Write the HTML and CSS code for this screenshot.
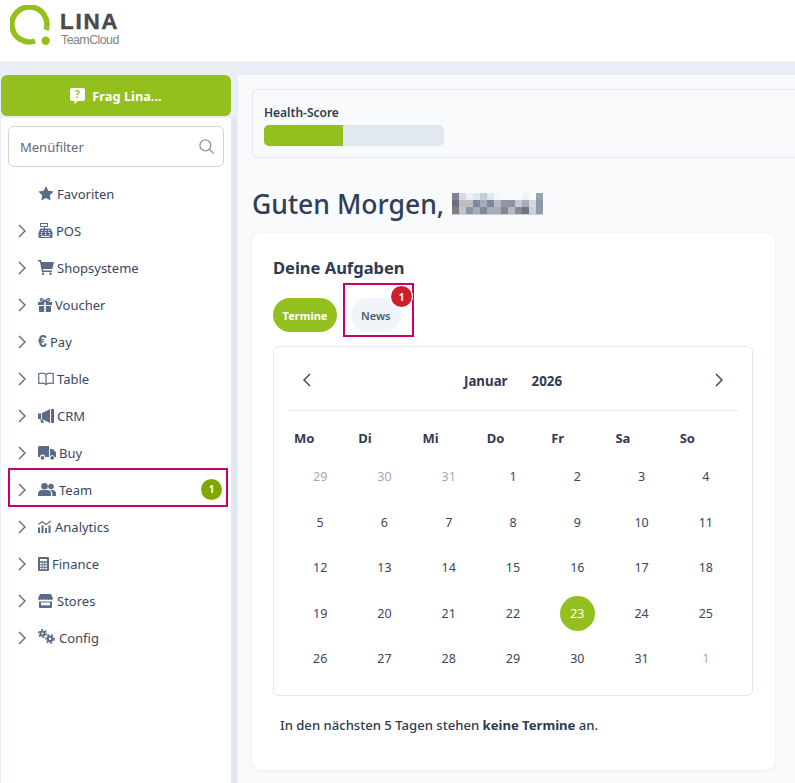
FILE: index.html
```html
<!DOCTYPE html>
<html lang="de">
<head>
    <meta charset="UTF-8">
    <meta name="viewport" content="width=device-width, initial-scale=1.0">
    <title>LINA TeamCloud</title>
    <link rel="stylesheet" href="styles.css">
</head>
<body>
    <header class="topbar">
        <div class="logo">
            <svg class="logo-mark" width="42" height="46" viewBox="0 0 42 46">
                <path d="M25 36 A17.500 17.500 0 1 1 36 25" fill="none" stroke="#93c01f" stroke-width="5.500"/>
                <circle cx="35.700" cy="35.700" r="4.200" fill="#93c01f"/>
            </svg>
            <div class="logo-text">
                <div class="logo-name">LINA</div>
                <div class="logo-sub">TeamCloud</div>
            </div>
        </div>
    </header>

    <div class="layout">
        <aside class="sidebar">
            <button class="ask-btn">
                <svg width="15" height="16" viewBox="0 0 15 16"><path d="M2 0h11a2 2 0 0 1 2 2v9a2 2 0 0 1-2 2H8l-3.500 3v-3H2a2 2 0 0 1-2-2V2a2 2 0 0 1 2-2z" fill="#fff"/><text x="7.500" y="10" class="ask-mark">?</text></svg>
                Frag Lina...
            </button>
            <div class="side-panel">
                <div class="filter">
                    <span>Menüfilter</span>
                    <svg width="15" height="15" viewBox="0 0 16 16" fill="none" stroke="#8b97a8" stroke-width="1.400"><circle cx="6.800" cy="6.800" r="5.800"/><path d="M11 11l4.500 4.500"/></svg>
                </div>
                <nav class="menu">
                    <a class="menu-item"><span class="chev"></span><svg class="ico" width="16" height="15" viewBox="0 0 16 15"><path d="M8 0l2.300 4.800 5.300.8-3.800 3.700.9 5.300L8 12.100l-4.700 2.500.9-5.300L.4 5.600l5.300-.8z"/></svg><span class="lbl">Favoriten</span></a>
                    <a class="menu-item"><svg class="chev" viewBox="0 0 8 14"><path d="M1 1l6 6-6 6"/></svg><svg class="ico" width="15" height="15" viewBox="0 0 15 15"><path d="M2 0h8v4H7v1.500h5a1 1 0 0 1 1 .7L14.500 10v4a1 1 0 0 1-1 1h-12a1 1 0 0 1-1-1v-4L2 6.200a1 1 0 0 1 1-.7h3V4H2zM3 1v2h6V1z"/><path d="M3.500 7.500h1.500M6.800 7.500h1.500M10 7.500h1.500M3 9.500h1.500M6.800 9.500h1.500M10.500 9.500H12M2.500 11.500H4M6.800 11.500h1.500M11 11.500h1.500M3 13.400h9" stroke="#fff" stroke-width="1"/></svg><span class="lbl">POS</span></a>
                    <a class="menu-item"><svg class="chev" viewBox="0 0 8 14"><path d="M1 1l6 6-6 6"/></svg><svg class="ico" width="16" height="15" viewBox="0 0 16 15"><path d="M0 0h3l.6 2H16l-1.700 7H5l.4 1.500H14V12H4L1.900 1.500H0z"/><circle cx="5" cy="13.800" r="1.200"/><circle cx="12.500" cy="13.800" r="1.200"/></svg><span class="lbl">Shopsysteme</span></a>
                    <a class="menu-item"><svg class="chev" viewBox="0 0 8 14"><path d="M1 1l6 6-6 6"/></svg><svg class="ico" width="14" height="14" viewBox="0 0 14 14"><path d="M0 4h6.200v3H0zM7.800 4H14v3H7.800zM1 8h5.200v6H2a1 1 0 0 1-1-1zM7.800 8H13v5a1 1 0 0 1-1 1H7.800z"/><path d="M7 3.500C5 .5 3 0 2.500 1.200S4 3.500 7 3.500zM7 3.500C9 .5 11 0 11.500 1.200S10 3.500 7 3.500z" fill="none" stroke="#5a6b85" stroke-width="1.300"/></svg><span class="lbl">Voucher</span></a>
                    <a class="menu-item"><svg class="chev" viewBox="0 0 8 14"><path d="M1 1l6 6-6 6"/></svg><span class="euro">€</span><span class="lbl">Pay</span></a>
                    <a class="menu-item"><svg class="chev" viewBox="0 0 8 14"><path d="M1 1l6 6-6 6"/></svg><svg class="ico ico-line" width="16" height="14" viewBox="0 0 16 14"><path d="M8 2.500C6.500 1 3 1 .8 1.500v10c2.200-.5 5.700-.5 7.200 1 1.500-1.500 5-1.500 7.200-1v-10C13 1 9.500 1 8 2.500zM8 2.500v10"/></svg><span class="lbl">Table</span></a>
                    <a class="menu-item"><svg class="chev" viewBox="0 0 8 14"><path d="M1 1l6 6-6 6"/></svg><svg class="ico" width="16" height="14" viewBox="0 0 16 14"><path d="M0 4.500h3V10H0zM3.800 4.300L12 0v14L3.800 10zM13 0h3v14h-3zM2 10.500h2.500L6 14H3.500z"/></svg><span class="lbl">CRM</span></a>
                    <a class="menu-item"><svg class="chev" viewBox="0 0 8 14"><path d="M1 1l6 6-6 6"/></svg><svg class="ico" width="18" height="14" viewBox="0 0 18 14"><path d="M1.500 0H11v11H7a2.500 2.500 0 0 0-5 0A1.500 1.500 0 0 1 0 10V1.500A1.500 1.500 0 0 1 1.500 0zM12 3h3l3 3.500V11h-1.500a2.500 2.500 0 0 0-4.500-.500z"/><circle cx="4.500" cy="11.800" r="1.900"/><circle cx="14.200" cy="11.800" r="1.900"/></svg><span class="lbl">Buy</span></a>
                    <a class="menu-item menu-item-marked"><svg class="chev" viewBox="0 0 8 14"><path d="M1 1l6 6-6 6"/></svg><svg class="ico" width="18" height="13" viewBox="0 0 18 13"><circle cx="6.500" cy="3.300" r="3.300"/><path d="M0 13v-2.500A4 4 0 0 1 4 7h5a4 4 0 0 1 4 4v2z"/><circle cx="13" cy="3.500" r="2.800"/><path d="M11.500 7H14a4 4 0 0 1 4 4v2h-3.800v-2.500a4 4 0 0 0-2.700-3.500z"/></svg><span class="lbl">Team</span><span class="menu-badge">1</span></a>
                    <a class="menu-item"><svg class="chev" viewBox="0 0 8 14"><path d="M1 1l6 6-6 6"/></svg><svg class="ico" width="14" height="13" viewBox="0 0 14 13"><path d="M0 7.500h2V13H0zM3.500 5.500h2V13h-2zM7 8h2v5H7zM10.500 5.500h2V13h-2z"/><path d="M.5 4.500L4.200 1.500 8 4.500l5-3.500" fill="none" stroke="#5a6b85" stroke-width="1.100"/></svg><span class="lbl">Analytics</span></a>
                    <a class="menu-item"><svg class="chev" viewBox="0 0 8 14"><path d="M1 1l6 6-6 6"/></svg><svg class="ico" width="11" height="14" viewBox="0 0 11 14"><path d="M1 0h9a1 1 0 0 1 1 1v12a1 1 0 0 1-1 1H1a1 1 0 0 1-1-1V1a1 1 0 0 1 1-1z"/><path d="M2 2h7v2.200H2zM2 5.800h1.800v1.500H2zM4.600 5.800h1.800v1.500H4.600zM7.200 5.800H9v1.500H7.200zM2 8.300h1.800v1.500H2zM4.600 8.300h1.800v1.500H4.600zM7.200 8.300H9v1.500H7.200zM2 10.800h1.800v1.500H2zM4.600 10.800h1.800v1.500H4.600zM7.200 10.800H9v1.500H7.200z" fill="#fff"/></svg><span class="lbl">Finance</span></a>
                    <a class="menu-item"><svg class="chev" viewBox="0 0 8 14"><path d="M1 1l6 6-6 6"/></svg><svg class="ico" width="15" height="14" viewBox="0 0 15 14"><path d="M2 0h11l2 4.500a1.700 1.700 0 0 1-3 .8 2.100 2.100 0 0 1-3 0 2.100 2.100 0 0 1-3 0 2.100 2.100 0 0 1-3 0 1.700 1.700 0 0 1-3-.8z"/><path d="M1 7.500h13V13a1 1 0 0 1-1 1H2a1 1 0 0 1-1-1z"/><path d="M3 8.500h9v2.800H3z" fill="#fff"/></svg><span class="lbl lbl-stores">Stores</span></a>
                    <a class="menu-item"><svg class="chev" viewBox="0 0 8 14"><path d="M1 1l6 6-6 6"/></svg><svg class="ico ico-gears" width="17" height="15" viewBox="0 0 17 15"><circle cx="4.500" cy="4.500" r="3.100"/><circle cx="4.500" cy="4.500" r="3.800" class="gear-teeth"/><circle cx="4.500" cy="4.500" r="1.100" fill="#fff"/><circle cx="12" cy="9.800" r="3.400"/><circle cx="12" cy="9.800" r="4.100" class="gear-teeth"/><circle cx="12" cy="9.800" r="1.200" fill="#fff"/></svg><span class="lbl">Config</span></a>
                </nav>
            </div>
        </aside>

        <main class="content">
            <section class="health">
                <div class="health-title">Health-Score</div>
                <div class="health-track"><div class="health-fill"></div></div>
            </section>

            <h1 class="greeting">Guten Morgen,
                <svg class="blurred-name" width="91" height="22" viewBox="0 0 13 3.150" preserveAspectRatio="none" shape-rendering="crispEdges">
                    <rect x="0" y="0" width="1" height="1" fill="#7f8792"/><rect x="1" y="0" width="1" height="1" fill="#d3dbe6"/><rect x="2" y="0" width="1" height="1" fill="#eceff3"/><rect x="3" y="0" width="1" height="1" fill="#e4e7ec"/><rect x="4" y="0" width="1" height="1" fill="#c0cddd"/><rect x="5" y="0" width="1" height="1" fill="#dfe5ec"/><rect x="6" y="0" width="1" height="1" fill="#f3f5f8"/><rect x="10" y="0" width="1" height="1" fill="#eef1f5"/><rect x="12" y="0" width="1" height="1" fill="#98a2b0"/>
                    <rect x="0" y="1" width="1" height="1" fill="#6b717c"/><rect x="1" y="1" width="1" height="1" fill="#b8bec6"/><rect x="2" y="1" width="1" height="1" fill="#c2bdbd"/><rect x="3" y="1" width="1" height="1" fill="#7d8a9b"/><rect x="4" y="1" width="1" height="1" fill="#a3acb8"/><rect x="5" y="1" width="1" height="1" fill="#7f8894"/><rect x="6" y="1" width="1" height="1" fill="#b4bbc5"/><rect x="7" y="1" width="1" height="1" fill="#9298a2"/><rect x="8" y="1" width="1" height="1" fill="#8e939d"/><rect x="9" y="1" width="1" height="1" fill="#c5cbd4"/><rect x="10" y="1" width="1" height="1" fill="#a7adb6"/><rect x="11" y="1" width="1" height="1" fill="#d5dae1"/><rect x="12" y="1" width="1" height="1" fill="#8f99a6"/>
                    <rect x="0" y="2" width="1" height="1" fill="#7c7f87"/><rect x="1" y="2" width="1" height="1" fill="#c9c4c4"/><rect x="2" y="2" width="1" height="1" fill="#8b97a6"/><rect x="3" y="2" width="1" height="1" fill="#a4adba"/><rect x="4" y="2" width="1" height="1" fill="#7f8894"/><rect x="5" y="2" width="1" height="1" fill="#a6aeb9"/><rect x="6" y="2" width="1" height="1" fill="#a9aeb6"/><rect x="7" y="2" width="1" height="1" fill="#7f8a99"/><rect x="8" y="2" width="1" height="1" fill="#bdb9b8"/><rect x="9" y="2" width="1" height="1" fill="#7f8c9c"/><rect x="10" y="2" width="1" height="1" fill="#72777e"/><rect x="11" y="2" width="1" height="1" fill="#cad2dc"/><rect x="12" y="2" width="1" height="1" fill="#929cab"/>
                    <rect x="0" y="3" width="13" height="0.150" fill="#c8d0db"/>
                </svg>
            </h1>

            <section class="tasks">
                <h2 class="tasks-title">Deine Aufgaben</h2>
                <div class="tabs">
                    <button class="tab tab-active">Termine</button>
                    <div class="tab-mark">
                        <button class="tab">News</button>
                        <span class="tab-badge">1</span>
                    </div>
                </div>

                <div class="calendar">
                    <div class="cal-head">
                        <svg class="cal-arrow" viewBox="0 0 8 14"><path d="M7 1L1 7l6 6"/></svg>
                        <div class="cal-month"><span>Januar</span><span>2026</span></div>
                        <svg class="cal-arrow" viewBox="0 0 8 14"><path d="M1 1l6 6-6 6"/></svg>
                    </div>
                    <div class="cal-grid cal-weekdays">
                        <div>Mo</div><div>Di</div><div>Mi</div><div>Do</div><div>Fr</div><div>Sa</div><div>So</div>
                    </div>
                    <div class="cal-grid cal-days">
                        <div class="muted">29</div><div class="muted">30</div><div class="muted">31</div><div>1</div><div>2</div><div>3</div><div>4</div>
                        <div>5</div><div>6</div><div>7</div><div>8</div><div>9</div><div>10</div><div>11</div>
                        <div>12</div><div>13</div><div>14</div><div>15</div><div>16</div><div>17</div><div>18</div>
                        <div>19</div><div>20</div><div>21</div><div>22</div><div><span class="today">23</span></div><div>24</div><div>25</div>
                        <div>26</div><div>27</div><div>28</div><div>29</div><div>30</div><div>31</div><div class="muted">1</div>
                    </div>
                </div>

                <p class="tasks-note">In den nächsten 5 Tagen stehen <strong>keine Termine</strong> an.</p>
            </section>
        </main>
    </div>
</body>
</html>
```

FILE: styles.css
```css
* {
    box-sizing: border-box;
}
html, body {
    height: 100%;
}
body {
    margin: 0;
    font-family: "Noto Sans", "Open Sans", sans-serif;
    background-color: #eaeff7;
    color: #2f3b52;
    overflow: hidden;
}

/* header */
.topbar {
    height: 61px;
    background-color: white;
    padding: 5px 0 0 10px;
}
.logo {
    display: flex;
    align-items: flex-start;
}
.logo-mark {
    display: block;
}
.logo-text {
    margin: 6px 0 0 8px;
    font-family: "Liberation Sans", sans-serif;
}
.logo-name {
    font-size: 22.500px;
    font-weight: bold;
    line-height: 22px;
    letter-spacing: 1.700px;
    color: #4a4a4a;
    -webkit-text-stroke: 0.4px #4a4a4a;
}
.logo-sub {
    font-size: 12.500px;
    line-height: 12px;
    letter-spacing: -0.6px;
    margin: 1px 0 0 1px;
    color: #858585;
}

.layout {
    display: flex;
    height: 722px;
    padding-top: 14px;
}

/* sidebar */
.sidebar {
    width: 238px;
    flex-shrink: 0;
    padding-left: 1px;
    display: flex;
    flex-direction: column;
}
.ask-btn {
    width: 230px;
    height: 41px;
    background-color: #93c01f;
    color: white;
    border: none;
    border-radius: 6px;
    font-family: inherit;
    font-size: 12.800px;
    font-weight: 700;
    display: flex;
    align-items: center;
    justify-content: center;
    gap: 7px;
    flex-shrink: 0;
}
.ask-mark {
    font-size: 10px;
    font-weight: 700;
    fill: #93c01f;
    text-anchor: middle;
}
.side-panel {
    width: 236px;
    flex: 1;
    margin-top: 2px;
    background-color: white;
    padding: 8px 7px 0 7px;
    border-right: 6px solid #e2e8f0;
}
.filter {
    height: 41px;
    width: 216px;
    border: 1px solid #cdd5e2;
    border-radius: 6px;
    padding: 0 9px 0 11px;
    display: flex;
    align-items: center;
    justify-content: space-between;
    font-size: 13px;
    color: #5c6b80;
}
.menu {
    margin-top: 8px;
}
.menu-item {
    display: flex;
    align-items: center;
    height: 37px;
    font-size: 13px;
    color: #3a4660;
    padding-left: 10px;
}
.menu-item-marked {
    width: 220px;
    height: 39px;
    margin: -3.500px 0 1.500px;
    border: 2px solid #c8006e;
    padding: 5px 0 0 8px;
    position: relative;
}
.chev {
    width: 8px;
    height: 14px;
    flex-shrink: 0;
    margin-right: 12px;
    fill: none;
    stroke: #5a6b85;
    stroke-width: 1.400;
}
.ico {
    flex-shrink: 0;
    fill: #5a6b85;
    margin-right: 3px;
}
.ico-line {
    fill: none;
    stroke: #5a6b85;
    stroke-width: 1.200;
}
.ico-gears {
    margin-top: -2px;
    margin-right: 4px;
}
.gear-teeth {
    fill: none;
    stroke: #5a6b85;
    stroke-width: 1.500;
    stroke-dasharray: 2 2;
}
.lbl-stores {
    margin-left: 1px;
}
.euro {
    width: 9px;
    font-family: "Liberation Sans", sans-serif;
    font-size: 16px;
    font-weight: bold;
    line-height: 16px;
    color: #5a6b85;
    margin-right: 3px;
}
.menu-badge {
    position: absolute;
    right: 4px;
    top: 9px;
    width: 21px;
    height: 21px;
    border-radius: 50%;
    background-color: #7fa800;
    color: white;
    font-size: 10px;
    font-weight: 700;
    display: flex;
    align-items: center;
    justify-content: center;
}

/* main */
.content {
    flex: 1;
    min-width: 0;
    background-color: #f9fafc;
    padding: 14px 20px 0 14px;
}
.health {
    width: 543px;
    height: 69px;
    border: 1px solid #e3e8f0;
    border-right: none;
    border-radius: 6px 0 0 6px;
    padding: 15px 11px 0;
}
.health-title {
    font-size: 12px;
    font-weight: 600;
    line-height: 16px;
    margin-bottom: 4px;
}
.health-track {
    width: 180px;
    height: 21px;
    background-color: #e2e8f0;
    border-radius: 5px;
    overflow: hidden;
}
.health-fill {
    width: 44%;
    height: 100%;
    background-color: #93c01f;
}
.greeting {
    margin: 29px 0 0 0;
    height: 46px;
    line-height: 34px;
    font-size: 26.550px;
    font-weight: 500;
    color: #2f3f58;
    display: flex;
    align-items: flex-start;
    gap: 8px;
}
.blurred-name {
    flex-shrink: 0;
    margin-top: 6px;
}
.tasks {
    width: 523px;
    height: 537px;
    background-color: white;
    border-radius: 10px;
    box-shadow: 0 1px 4px rgba(0, 0, 0, 0.06);
    padding: 24px 22px 0 21px;
}
.tasks-title {
    margin: 0;
    font-size: 16.500px;
    font-weight: 700;
    line-height: 22px;
}
.tabs {
    display: flex;
    align-items: flex-end;
    margin-top: 4px;
    height: 54px;
}
.tab {
    height: 34px;
    padding: 0 10px;
    border: none;
    border-radius: 17px;
    background-color: #f0f4f9;
    color: #4a5c7a;
    font-family: inherit;
    font-size: 11px;
    font-weight: 600;
}
.tab-active {
    width: 64px;
    padding: 0;
    background-color: #93c01f;
    color: white;
    font-weight: 700;
    margin-bottom: 5px;
}
.tab-mark {
    position: relative;
    width: 71px;
    height: 54px;
    margin-left: 6px;
    border: 2px solid #c8006e;
    padding: 13px 0 0 6px;
}
.tab-mark .tab {
    display: block;
}
.tab-badge {
    position: absolute;
    top: 1px;
    right: 0;
    width: 21px;
    height: 21px;
    border-radius: 50%;
    background-color: #cf1f2e;
    box-shadow: 0 0 0 1px white;
    color: white;
    font-size: 10px;
    font-weight: 700;
    display: flex;
    align-items: center;
    justify-content: center;
}

/* calendar */
.calendar {
    width: 480px;
    height: 350px;
    margin-top: 9px;
    background-color: white;
    border: 1px solid #e3e8f0;
    border-radius: 6px;
    padding: 0 14px;
}
.cal-head {
    height: 64px;
    border-bottom: 1px solid #e3e8f0;
    display: flex;
    align-items: center;
    justify-content: space-between;
    padding: 2px 15px 0;
}
.cal-arrow {
    width: 8px;
    height: 14px;
    fill: none;
    stroke: #3f4a5c;
    stroke-width: 1.500;
}
.cal-month {
    display: flex;
    gap: 24px;
    padding-top: 2px;
    font-size: 13.300px;
    font-weight: 700;
}
.cal-grid {
    display: grid;
    grid-template-columns: repeat(7, 1fr);
}
.cal-weekdays {
    margin-top: 17px;
    font-size: 13px;
    font-weight: 700;
    line-height: 20px;
    padding-bottom: 6px;
}
.cal-weekdays div {
    padding-left: 6px;
}
.cal-days {
    grid-auto-rows: 45.500px;
    font-size: 12.500px;
    color: #3a4660;
}
.cal-days div {
    display: flex;
    align-items: center;
    justify-content: center;
}
.cal-days .muted {
    color: #a3abb8;
}
.today {
    width: 35px;
    height: 35px;
    border-radius: 50%;
    background-color: #93c01f;
    color: white;
    display: flex;
    align-items: center;
    justify-content: center;
}
.tasks-note {
    margin: 20px 0 0 7px;
    font-size: 13.100px;
    font-weight: 500;
    line-height: 18px;
}
```
